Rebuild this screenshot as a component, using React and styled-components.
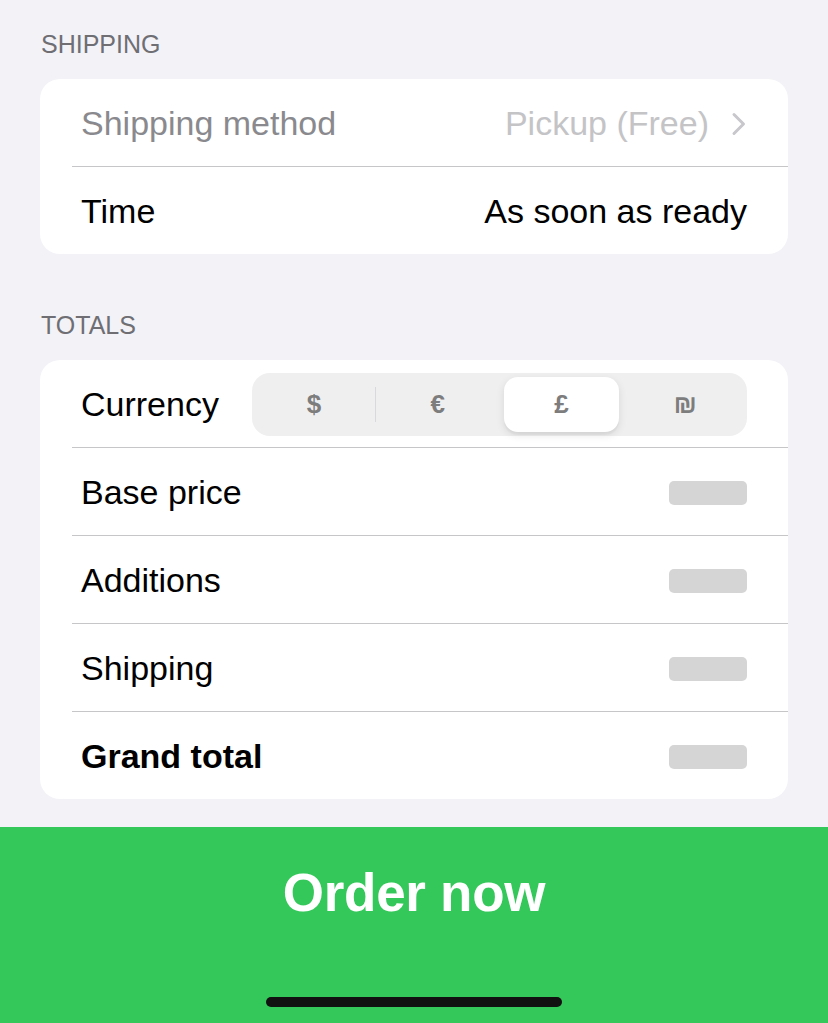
import React, { useState } from 'react';
import styled, { createGlobalStyle } from 'styled-components';

const GlobalStyle = createGlobalStyle`
  html, body {
    margin: 0;
    padding: 0;
    background: #f2f2f7;
    font-family: "Liberation Sans", "DejaVu Sans", Arial, sans-serif;
    -webkit-font-smoothing: antialiased;
  }
  * { box-sizing: border-box; }
`;

const Page = styled.div`
  display: flex;
  flex-direction: column;
  min-height: 100vh;
  background: #f2f2f7;
`;

const Content = styled.div`
  display: flex;
  flex-direction: column;
  padding: 29px 40px 28px;
`;

const SectionHeader = styled.div`
  font-size: 25px;
  line-height: 30px;
  color: #6e6e73;
  padding: 0 1px;
  margin-top: ${p => (p.first ? '0' : '56px')};
  margin-bottom: 20px;
`;

const Card = styled.div`
  display: flex;
  flex-direction: column;
  background: #fff;
  border-radius: 20px;
  overflow: hidden;
`;

const Row = styled.div`
  display: flex;
  align-items: center;
  height: 87px;
  padding: 2px 41px 0 41px;
  font-size: 34px;
  color: ${p => (p.disabled ? '#8a8a8e' : '#000')};
  font-weight: ${p => (p.bold ? 700 : 400)};
`;

const Separator = styled.div`
  height: 1px;
  margin-left: 32px;
  background: #c6c6c8;
`;

const Label = styled.span`
  flex: 1;
  white-space: nowrap;
`;

const Value = styled.span`
  display: flex;
  align-items: center;
  color: ${p => (p.muted ? '#c4c4c7' : '#000')};
  white-space: nowrap;
`;

const Chevron = styled.svg`
  margin-left: 22px;
  width: 16px;
  height: 24px;
`;

const Placeholder = styled.div`
  width: 78px;
  height: 24px;
  border-radius: 5px;
  background: #d5d5d5;
`;

const Segmented = styled.div`
  display: grid;
  grid-template-columns: repeat(4, 1fr);
  width: 495px;
  height: 63px;
  padding: 4px 0;
  margin-left: auto;
  border-radius: 18px;
  background: #efeff0;
`;

const Segment = styled.button`
  position: relative;
  margin: 0 4px;
  border: none;
  border-radius: 14px;
  font-family: inherit;
  font-size: 26px;
  font-weight: 600;
  color: #7d7d7d;
  background: ${p => (p.selected ? '#fff' : 'transparent')};
  box-shadow: ${p => (p.selected ? '0 3px 8px rgba(0,0,0,0.10), 0 3px 1px rgba(0,0,0,0.03)' : 'none')};
  cursor: pointer;
  &::before {
    content: '';
    display: ${p => (p.divider ? 'block' : 'none')};
    position: absolute;
    left: -5px;
    top: 10px;
    bottom: 10px;
    width: 1px;
    background: #d9d9db;
  }
`;

const Footer = styled.div`
  margin-top: auto;
  display: flex;
  flex-direction: column;
  align-items: center;
  background: #34c759;
  padding: 34px 0 16px;
`;

const OrderButton = styled.button`
  border: none;
  background: transparent;
  color: #fff;
  font-family: inherit;
  font-size: 53px;
  line-height: 64px;
  font-weight: 700;
  letter-spacing: -0.3px;
  padding: 0;
  cursor: pointer;
`;

const HomeIndicator = styled.div`
  margin-top: 72px;
  width: 296px;
  height: 10px;
  border-radius: 5px;
  background: #111;
`;

const currencies = ['$', '€', '£', '₪'];
const totals = [
  { label: 'Base price' },
  { label: 'Additions' },
  { label: 'Shipping' },
  { label: 'Grand total', bold: true },
];

export default function App() {
  const [currency, setCurrency] = useState(2);

  return (
    <>
      <GlobalStyle />
      <Page>
        <Content>
          <SectionHeader first>SHIPPING</SectionHeader>
          <Card>
            <Row disabled>
              <Label>Shipping method</Label>
              <Value muted>
                Pickup (Free)
                <Chevron viewBox="0 0 16 24" fill="none">
                  <path d="M3 2.5 L12.5 12 L3 21.5" stroke="#c7c7cc" strokeWidth="3" strokeLinecap="round" strokeLinejoin="round" />
                </Chevron>
              </Value>
            </Row>
            <Separator />
            <Row>
              <Label>Time</Label>
              <Value>As soon as ready</Value>
            </Row>
          </Card>

          <SectionHeader>TOTALS</SectionHeader>
          <Card>
            <Row>
              <Label>Currency</Label>
              <Segmented>
                {currencies.map((c, i) => (
                  <Segment
                    key={c}
                    selected={i === currency}
                    divider={i > 0 && i !== currency && i - 1 !== currency}
                    onClick={() => setCurrency(i)}
                  >
                    {c}
                  </Segment>
                ))}
              </Segmented>
            </Row>
            {totals.map(t => (
              <React.Fragment key={t.label}>
                <Separator />
                <Row bold={t.bold}>
                  <Label>{t.label}</Label>
                  <Placeholder />
                </Row>
              </React.Fragment>
            ))}
          </Card>
        </Content>

        <Footer>
          <OrderButton>Order now</OrderButton>
          <HomeIndicator />
        </Footer>
      </Page>
    </>
  );
}
